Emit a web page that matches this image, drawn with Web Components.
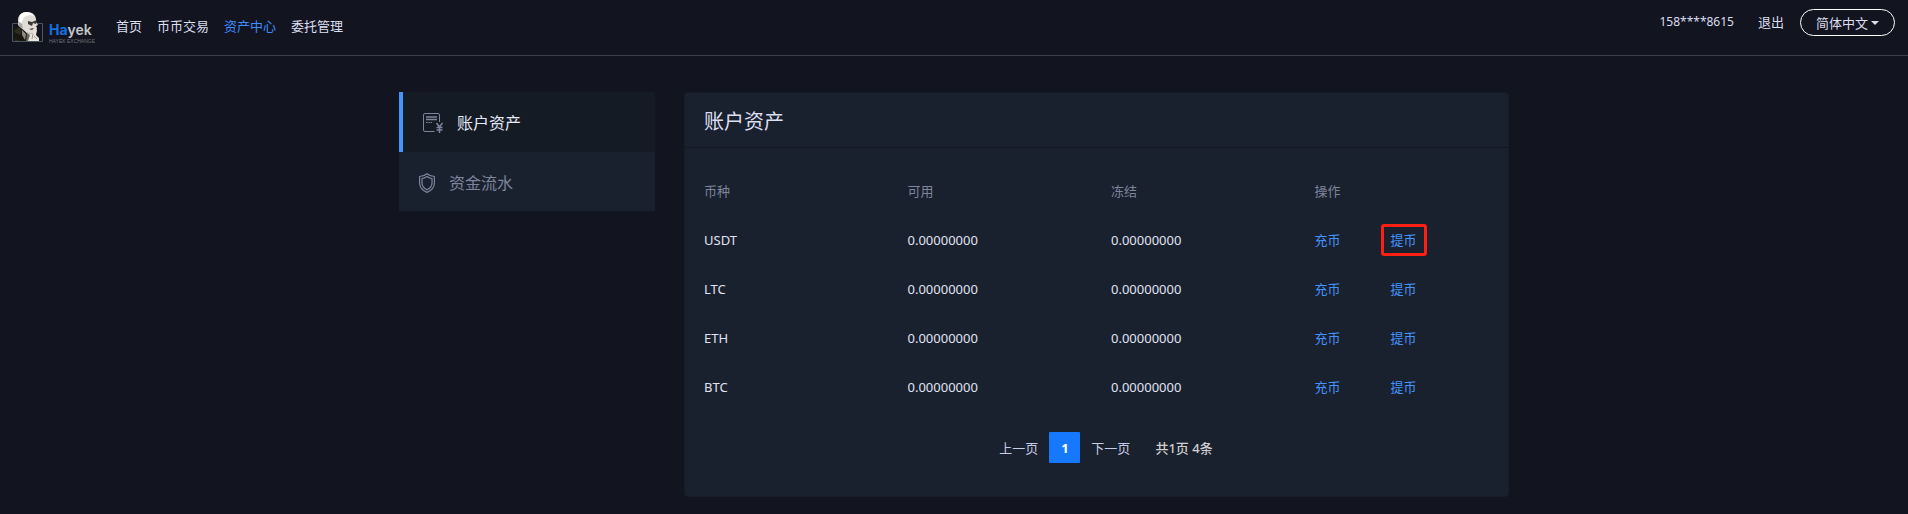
<!DOCTYPE html>
<html lang="zh-CN">
<head>
<meta charset="utf-8">
<meta name="viewport" content="width=device-width, initial-scale=1">
<title>资产中心</title>
<style>
  html { background: #121420; }
  body {
    margin: 0;
    font: 13px/20px "Noto Sans", "Noto Sans CJK SC", sans-serif;
    color: #c7cce6;
  }
</style>
</head>
<body>
<app-header>
  <nav-link href="#home">首页</nav-link>
  <nav-link href="#trade">币币交易</nav-link>
  <nav-link href="#assets" active>资产中心</nav-link>
  <nav-link href="#orders">委托管理</nav-link>
  <user-menu slot="user" phone="158****8615"></user-menu>
</app-header>
<asset-layout>
  <side-menu slot="side">
    <side-item icon="bill" href="#account" active>账户资产</side-item>
    <side-item icon="shield" href="#flow">资金流水</side-item>
  </side-menu>
  <panel-card>
    <span slot="title">账户资产</span>
    <asset-table></asset-table>
    <page-nav></page-nav>
  </panel-card>
</asset-layout>

<script>
class Base extends HTMLElement {
  connectedCallback() {
    if (!this.shadowRoot) this.attachShadow({ mode: "open" }).innerHTML = this.render();
  }
}

customElements.define("brand-logo", class extends Base {
  render() {
    return `<style>
      :host { display: block; }
      a { display: flex; align-items: flex-end; gap: 5px; width: 81px; color: #c4c6ca; text-decoration: none; }
      svg { display: block; flex: none; width: 32px; height: 32px; }
      .words { display: flex; flex-direction: column; }
      .name { font: 600 14px/16px Inter, sans-serif; }
      .name b { font-weight: 700; color: #176fe0; }
      .sub { font: 5px/6px "Liberation Sans", sans-serif; color: #70727a; white-space: nowrap; }
    </style>
    <a href="#home">
      <svg viewBox="0 0 32 32" aria-hidden="true">
        <path d="M.5 11.500h30v18H.5z" fill="none" stroke="#4a5661"/>
        <path d="M1 15l5-1 5 4 7 4 2 7H1z" fill="#17170f"/>
        <path d="M2 19l5-4 3 4-2 4-4-2zM3 27l5 2H3z" fill="#2d2c20"/>
        <path d="M6 8c0-5 4-8 9-8 6 0 10 4 9 10l2 3-2 1 1 2-1 4-5 2-5-2-5-4-3-3z" fill="#dedcd5"/>
        <path d="M8 3c3-4 11-4 14 1l-4-1-6 2-2 5-3 2z" fill="#fffef9"/>
        <path d="M6 9l4 3 1 5-4-3z" fill="#aaa99f"/>
        <path d="M16 9l4 1 5-2-1 4-3-1-1 3-4-2zM17 17l5-1-2 2z" fill="#3b3931"/>
        <path d="M12 17l4 4 4 1 3-5 2 1-1 5 3 3v3H15l1-6z" fill="#e8e6df"/>
        <path d="M15 21l3 2-2 6h-2z" fill="#69675e"/>
        <path d="M21 22l-1 5M22 24l3 3" stroke="#69675e" stroke-width=".6"/>
        <path d="M10 18l4 4-1 6-3-5z" fill="#8d8b80"/>
      </svg>
      <span class="words">
        <span class="name"><b>Ha</b>yek</span>
        <span class="sub">HAYEK EXCHANGE</span>
      </span>
    </a>`;
  }
});

customElements.define("nav-link", class extends Base {
  render() {
    return `<style>
      :host { display: block; color: #dcdff0; }
      :host([active]) { color: #3d8bff; }
      a { color: inherit; text-decoration: none; }
    </style><a href="${this.getAttribute("href")}"><slot></slot></a>`;
  }
});

customElements.define("user-menu", class extends Base {
  render() {
    return `<style>
      :host { display: flex; align-items: flex-start; gap: 24px; }
      .phone { font-size: 12px; color: #dcdff0; }
      .quit { color: #dcdff0; text-decoration: none; }
      .phone, .quit { padding-top: 3px; }
      .lang {
        display: flex; align-items: center; gap: 3px; box-sizing: border-box; height: 27px;
        margin-left: -8px; padding: 0 15px; border: 1px solid #fff; border-radius: 14px;
        background: none; font: inherit; color: #dcdff0; cursor: pointer;
      }
      .lang::after { content: ""; border: 4px solid transparent; border-top-color: currentColor; border-bottom: 0; }
    </style>
    <span class="phone">${this.getAttribute("phone")}</span>
    <a class="quit" href="#logout">退出</a>
    <button class="lang" type="button" aria-haspopup="true">简体中文</button>`;
  }
});

customElements.define("app-header", class extends Base {
  render() {
    return `<style>
      :host { display: block; border-bottom: 1px solid #3d3f4c; background: #12141f; }
      header { display: flex; align-items: flex-start; height: 55px; padding: 0 13px 0 12px; }
      brand-logo { margin-top: 12px; }
      nav { display: flex; gap: 15px; padding: 16px 0 0 23px; }
      .user { margin: 9px 0 0 auto; }
    </style>
    <header>
      <brand-logo></brand-logo>
      <nav><slot></slot></nav>
      <div class="user"><slot name="user"></slot></div>
    </header>`;
  }
});

customElements.define("asset-layout", class extends Base {
  render() {
    return `<style>
      :host { display: block; padding: 36px 15px 16px; }
      main { display: grid; grid-template-columns: 256px 1fr; gap: 29px; align-items: start; max-width: 1110px; margin: 0 auto; }
    </style>
    <main><aside><slot name="side"></slot></aside><section><slot></slot></section></main>`;
  }
});

customElements.define("side-menu", class extends Base {
  render() {
    return `<style>:host { display: block; background: #19202e; }</style><nav><slot></slot></nav>`;
  }
});

const ICONS = {
  bill: `<svg width="20" height="20" viewBox="0 0 20 20" aria-hidden="true" fill="none" stroke="currentColor">
    <path d="M11.500 18.500H2A1.500 1.500 0 0 1 .5 17V2A1.500 1.500 0 0 1 2 .5h13A1.500 1.500 0 0 1 16.500 2v7"/>
    <path d="M3 4h11M3 6.500h11" stroke-width="1.300"/><path d="M3 9.500h6" stroke-dasharray="1.500 .8"/>
    <path d="M13.500 10l3 4 3-4M16.500 13.500V20M13.500 14.500h6M13.500 17h6" stroke-width="1.500"/></svg>`,
  shield: `<svg width="16" height="20" viewBox="0 0 16 20" aria-hidden="true" fill="none" stroke="currentColor" stroke-width="1.200" stroke-linejoin="round">
    <path d="M8 .7c2 1.700 4.500 2.600 7.400 2.800v6.500c0 4.500-3 7.500-7.400 9.400C3.600 17.500.6 14.500.6 10V3.500C3.500 3.300 6 2.400 8 .7z"/>
    <path d="M8 3.500c1.500 1.100 3.200 1.800 5 2V10c0 3.300-2 5.400-5 6.800C5 15.400 3 13.300 3 10V5.500c1.800-.2 3.500-.9 5-2z"/></svg>`
};

customElements.define("side-item", class extends Base {
  render() {
    return `<style>
      :host { display: block; color: #7d869c; }
      :host([active]) { background: #151b24; border-left: 4px solid #4594fd; }
      a { display: flex; align-items: center; gap: 14px; box-sizing: border-box; height: 59px; padding: 2px 20px 0; color: inherit; font-size: 16px; text-decoration: none; }
      :host([active]) a { height: 60px; }
      :host([active]) span { color: #e6e9f8; }
    </style>
    <a href="${this.getAttribute("href")}">${ICONS[this.getAttribute("icon")]}<span><slot></slot></span></a>`;
  }
});

customElements.define("panel-card", class extends Base {
  render() {
    return `<style>
      :host { display: block; border: 1px solid #171c28; border-radius: 4px; background: #19202e; }
      h1 { margin: 0; padding: 14px 19px 10px; border-bottom: 1px solid #11161f; font-size: 20px; line-height: 30px; font-weight: 400; color: #dcdff0; }
      .body { padding: 18px 3px 33px 6px; }
    </style>
    <h1><slot name="title"></slot></h1>
    <div class="body"><slot></slot></div>`;
  }
});

customElements.define("asset-table", class extends Base {
  render() {
    const zero = "0.00000000";
    const rows = ["USDT", "LTC", "ETH", "BTC"].map((coin, i) => `<tr>
      <td>${coin}</td><td>${zero}</td><td>${zero}</td>
      <td><div class="ops"><a href="#deposit">充币</a><a href="#withdraw"${i ? "" : ' class="marked"'}>提币</a></div></td></tr>`).join("");
    return `<style>
      :host { display: block; }
      table { width: 100%; table-layout: fixed; border-collapse: collapse; }
      th, td { height: 49px; padding: 0 0 0 13px; text-align: left; font-weight: 400; color: #e0e3f2; }
      th { color: #7d869c; }
      .ops { display: flex; gap: 50px; }
      a { position: relative; color: #4594fd; text-decoration: none; }
      .marked::after { content: ""; position: absolute; inset: -6px -10px; border: 3px solid #ff1e12; border-radius: 3px; }
    </style>
    <table>
      <thead><tr><th>币种</th><th>可用</th><th>冻结</th><th>操作</th></tr></thead>
      <tbody>${rows}</tbody>
    </table>`;
  }
});

customElements.define("page-nav", class extends Base {
  render() {
    return `<style>
      :host { display: block; padding-top: 21px; }
      nav { display: flex; justify-content: center; align-items: center; gap: 11px; padding-left: 16px; }
      button { padding: 0; border: 0; background: none; font: inherit; color: #c7cce6; cursor: pointer; }
      .current { width: 31px; height: 31px; border-radius: 1px; background: #1677ff; color: #fff; font-weight: 700; }
      .total { margin-left: 14px; font-weight: 500; color: #d0d0d0; }
    </style>
    <nav>
      <button type="button">上一页</button>
      <button type="button" class="current" aria-current="page">1</button>
      <button type="button">下一页</button>
      <span class="total">共1页 4条</span>
    </nav>`;
  }
});
</script>
</body>
</html>
